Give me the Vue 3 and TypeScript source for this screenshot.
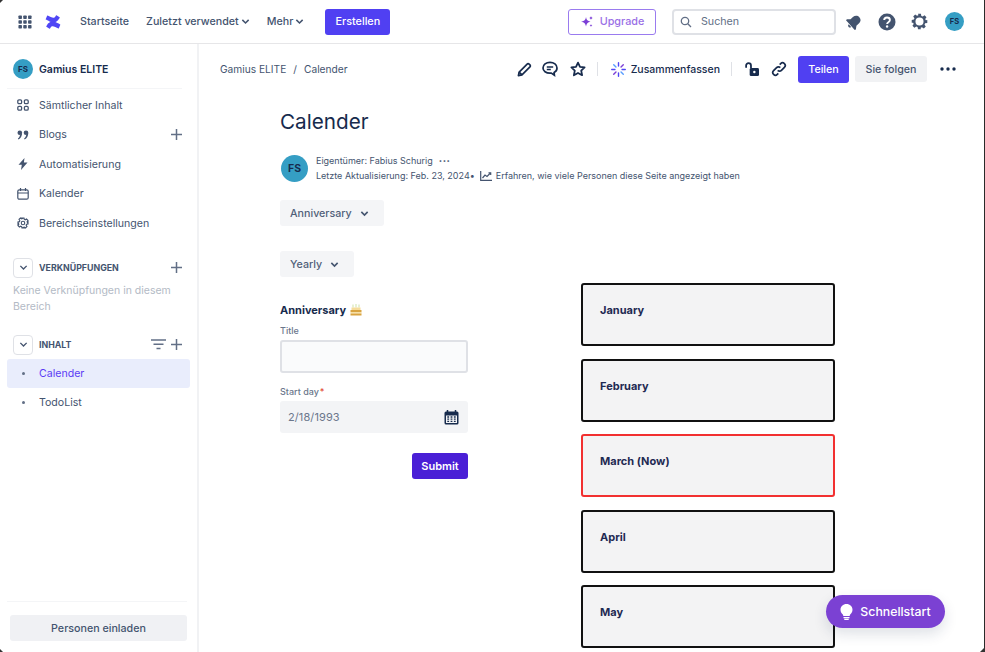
<script setup lang="ts">
const months = [
  { name: 'January', now: false },
  { name: 'February', now: false },
  { name: 'March (Now)', now: true },
  { name: 'April', now: false },
  { name: 'May', now: false },
]
</script>

<template>
  <div class="app">
    <header class="topbar">
      <svg class="grid-ic" width="14" height="14" viewBox="0 0 16 16" fill="#44546f">
        <rect v-for="p in [[0.5,0.5],[6,0.5],[11.5,0.5],[0.5,6],[6,6],[11.5,6],[0.5,11.5],[6,11.5],[11.5,11.5]]" :key="p.join()" :x="p[0]" :y="p[1]" width="4" height="4" rx=".8" />
      </svg>
      <svg class="logo" width="16" height="16" viewBox="0 0 24 24" fill="#4f46f5">
        <path d="M2.6 17.2c-.2.4-.5.9-.7 1.2a.5.5 0 0 0 .2.7l4.7 2.9a.5.5 0 0 0 .7-.2c.2-.3.4-.7.7-1.2 1.9-3.1 3.8-2.7 7.2-1.1l4.7 2.2a.5.5 0 0 0 .7-.3l2.2-5.1a.5.5 0 0 0-.3-.7c-1-.5-3-1.4-4.7-2.3C12.1 10.2 6.6 10.5 2.6 17.2z" />
        <path d="M21.4 6.8c.2-.4.5-.9.7-1.2a.5.5 0 0 0-.2-.7l-4.7-2.9a.5.5 0 0 0-.7.2c-.2.3-.4.7-.7 1.2-1.9 3.1-3.8 2.7-7.2 1.1L3.9 2.3a.5.5 0 0 0-.7.3L1 7.7a.5.5 0 0 0 .3.7c1 .5 3 1.4 4.7 2.3 5.9 3.1 11.4 2.8 15.4-3.9z" />
      </svg>
      <nav class="topnav">
        <span>Startseite</span>
        <span>Zuletzt verwendet<svg class="chev" width="9" height="9" viewBox="0 0 10 10"><path d="M1.5 3.2 5 6.7l3.5-3.5" fill="none" stroke="#44546f" stroke-width="1.7" /></svg></span>
        <span>Mehr<svg class="chev" width="9" height="9" viewBox="0 0 10 10"><path d="M1.5 3.2 5 6.7l3.5-3.5" fill="none" stroke="#44546f" stroke-width="1.7" /></svg></span>
      </nav>
      <button class="create">Erstellen</button>
      <div class="grow"></div>
      <button class="upgrade">
        <svg width="14" height="14" viewBox="0 0 14 14" fill="#7c3fd6"><path d="M6 2c.5 3 1.500 4 4.500 4.700C7.500 7.400 6.500 8.500 6 11.500 5.500 8.500 4.500 7.400 1 6.700 4.500 6 5.500 5 6 2z" /><path d="M11 1c.2 1.200.7 1.700 1.900 2-1.200.3-1.700.8-1.900 2-.2-1.200-.7-1.700-1.900-2C10.300 2.700 10.800 2.200 11 1zM11 9c.15.9.5 1.300 1.400 1.500-.9.2-1.250.6-1.400 1.500-.15-.9-.5-1.300-1.400-1.500.9-.2 1.250-.6 1.400-1.500z" /></svg>
        Upgrade
      </button>
      <div class="search">
        <svg width="12" height="12" viewBox="0 0 12 12" fill="none" stroke="#626f86" stroke-width="1.300"><circle cx="5" cy="5" r="3.700" /><path d="m7.800 7.800 3.200 3.200" /></svg>
        <span>Suchen</span>
      </div>
      <svg class="bell" width="16" height="16" viewBox="0 0 16 16" fill="#44546f"><g transform="rotate(48 8 8)"><path d="M8 .8C5.200.8 3.600 2.800 3.600 5.500v3.200L1.300 11.500v1.300h13.400v-1.300l-2.300-2.800V5.500C12.400 2.800 10.800.8 8 .8z" /><path d="M6.200 13.500a1.800 1.800 0 0 0 3.600 0z" /></g></svg>
      <svg class="help" width="18" height="18" viewBox="0 0 18 18"><circle cx="9" cy="9" r="8.500" fill="#44546f" /><path d="M6.200 7.100c0-1.600 1.200-2.600 2.800-2.600s2.900 1 2.900 2.500c0 2.300-2.800 2.100-2.800 4" fill="none" stroke="#fff" stroke-width="1.900" /><circle cx="9.100" cy="13.500" r="1.200" fill="#fff" /></svg>
      <svg class="gear" width="17" height="17" viewBox="0 0 24 24"><path fill="#44546f" fill-rule="evenodd" d="M10 1h4l.6 3.100 1.900.8 2.600-1.800 2.800 2.800-1.800 2.600.8 1.900L23 10v4l-3.100.6-.8 1.900 1.800 2.600-2.800 2.800-2.600-1.800-1.900.8L13.900 23h-4l-.6-3.100-1.900-.8-2.600 1.800-2.800-2.800 1.800-2.600-.8-1.900L1 13.900v-4l3.100-.6.8-1.900-1.800-2.600 2.800-2.800 2.600 1.800 1.900-.8zM12 6.300a5.700 5.700 0 1 0 0 11.400 5.700 5.700 0 0 0 0-11.400z" /></svg>
      <div class="avatar top-av">FS</div>
    </header>

    <div class="body">
      <aside class="sidebar">
        <div class="space">
          <div class="avatar space-av">FS</div>
          <b>Gamius ELITE</b>
        </div>
        <div class="rows">
          <div class="row">
            <svg width="12" height="12" viewBox="0 0 12 12" fill="none" stroke="#44546f" stroke-width="1.300"><rect x=".8" y=".8" width="3.800" height="3.800" rx="1.200" /><rect x="7.400" y=".8" width="3.800" height="3.800" rx="1.200" /><rect x=".8" y="7.400" width="3.800" height="3.800" rx="1.200" /><rect x="7.400" y="7.400" width="3.800" height="3.800" rx="1.200" /></svg>
            <span>Sämtlicher Inhalt</span>
          </div>
          <div class="row">
            <svg width="12" height="12" viewBox="0 0 12 12" fill="#44546f"><circle cx="2.800" cy="3.700" r="2.300" /><path d="M5.100 3.700c0 3.300-1.400 5.600-3.700 6.800l-.5-.9C2.300 8.500 2.900 7.200 3 5.700z" /><circle cx="9" cy="3.700" r="2.300" /><path d="M11.300 3.700c0 3.300-1.400 5.600-3.700 6.800l-.5-.9c1.400-1.100 2-2.400 2.100-3.900z" /></svg>
            <span>Blogs</span>
            <svg class="plus" width="11" height="11" viewBox="0 0 11 11"><path d="M5.500 0v11M0 5.500h11" stroke="#626f86" stroke-width="1.500" /></svg>
          </div>
          <div class="row">
            <svg width="12" height="12" viewBox="0 0 12 12" fill="#44546f"><path d="M7.500 0 1.500 6.800h3.300L4 12l6.500-7.500H6.900z" /></svg>
            <span>Automatisierung</span>
          </div>
          <div class="row">
            <svg width="12" height="12" viewBox="0 0 12 12" fill="none" stroke="#44546f" stroke-width="1.200"><rect x=".8" y="1.800" width="10.400" height="9.400" rx="1.500" /><path d="M.8 5h10.400M3.500 0v3M8.500 0v3" /></svg>
            <span>Kalender</span>
          </div>
          <div class="row">
            <svg width="12" height="12" viewBox="0 0 24 24"><path fill="none" stroke="#44546f" stroke-width="2.300" d="M10 2h4l.6 2.900 1.900.8 2.500-1.600 2.800 2.800-1.600 2.500.8 1.900L22 10v4l-2.900.6-.8 1.900 1.600 2.500-2.800 2.800-2.500-1.600-1.900.8L13.900 22h-4l-.6-2.900-1.900-.8-2.500 1.600-2.800-2.800 1.600-2.500-.8-1.900L2 13.900v-4l2.900-.6.8-1.900-1.600-2.500 2.800-2.800 2.500 1.600 1.900-.8z" /><circle cx="12" cy="12" r="3.500" fill="none" stroke="#44546f" stroke-width="2.300" /></svg>
            <span>Bereichseinstellungen</span>
          </div>
        </div>

        <div class="sec sec-first">
          <div class="box"><svg width="9" height="9" viewBox="0 0 10 10"><path d="M1.500 3.200 5 6.700l3.500-3.500" fill="none" stroke="#44546f" stroke-width="1.500" /></svg></div>
          <b>VERKNÜPFUNGEN</b>
          <svg class="plus" width="11" height="11" viewBox="0 0 11 11"><path d="M5.500 0v11M0 5.500h11" stroke="#626f86" stroke-width="1.500" /></svg>
        </div>
        <p class="none">Keine Verknüpfungen in diesem Bereich</p>

        <div class="sec sec-second">
          <div class="box"><svg width="9" height="9" viewBox="0 0 10 10"><path d="M1.500 3.200 5 6.700l3.500-3.500" fill="none" stroke="#44546f" stroke-width="1.500" /></svg></div>
          <b>INHALT</b>
          <svg class="filter" width="15" height="11" viewBox="0 0 15 11"><path d="M0 1h15M2.500 5.200h10M5.500 9.500h4" stroke="#626f86" stroke-width="1.400" /></svg>
          <svg class="plus tight" width="11" height="11" viewBox="0 0 11 11"><path d="M5.500 0v11M0 5.500h11" stroke="#626f86" stroke-width="1.500" /></svg>
        </div>
        <div class="tree active"><i></i><span>Calender</span></div>
        <div class="tree"><i></i><span>TodoList</span></div>

        <div class="grow"></div>
        <div class="invite-wrap"><button class="invite">Personen einladen</button></div>
      </aside>

      <main class="main">
        <div class="pagebar">
          <div class="crumbs">Gamius ELITE<em>/</em>Calender</div>
          <div class="grow"></div>
          <svg class="act" width="15" height="15" viewBox="0 0 16 16" fill="none" stroke="#172b4d" stroke-width="1.800"><path d="M1.500 14.500 2.300 10.700 10.800 2.200c.6-.6 1.500-.6 2.100 0l.9.9c.6.6.6 1.500 0 2.100L5.300 13.700z" stroke-linejoin="round" /><path d="m2.300 10.700 3 3" /></svg>
          <svg class="act a2" width="16" height="16" viewBox="0 0 16 16" fill="none" stroke="#172b4d" stroke-width="1.700"><path d="M8 1.300c3.900 0 7 2.400 7 5.600 0 2.100-1.200 3.700-2.900 4.600l.3 2.700-3.100-2.100c-.4.100-.8.100-1.300.1-3.900 0-7-2.200-7-5.300S4.100 1.300 8 1.300z" /><path d="M4.800 6h6.400M4.800 8.500h4" /></svg>
          <svg class="act a3" width="16" height="16" viewBox="0 0 16 16" fill="none" stroke="#172b4d" stroke-width="1.800"><path d="m8 1.600 2 4.200 4.600.6-3.400 3.200.9 4.600L8 12.000l-4.100 2.200.9-4.600L1.400 6.400 6 5.800z" stroke-linejoin="round" /></svg>
          <span class="sep s1"></span>
          <svg class="spark" width="15" height="15" viewBox="0 0 16 16" stroke-width="1.500" stroke-linecap="round"><path d="M8 .8v3.400M8 11.800v3.400M.8 8h3.400M11.800 8h3.400" stroke="#4f46f5" /><path d="m2.900 2.900 2.400 2.400M10.700 10.700l2.400 2.400" stroke="#579dff" /><path d="m13.100 2.900-2.400 2.400M5.300 10.700l-2.400 2.400" stroke="#7c3fd6" /></svg>
          <span class="summ">Zusammenfassen</span>
          <span class="sep s2"></span>
          <svg class="act lock" width="14" height="15" viewBox="0 0 15 16"><path d="M1.200 6V3.800C1.200 2.300 2.300 1.200 3.800 1.200s2.600 1.100 2.600 2.600V6.500" fill="none" stroke="#172b4d" stroke-width="1.900" /><rect x="5" y="6.500" width="10" height="8.500" rx="1.500" fill="#172b4d" /><circle cx="10" cy="10.700" r="1.300" fill="#fff" /></svg>
          <svg class="act link" width="16" height="16" viewBox="0 0 16 16" fill="none" stroke="#172b4d" stroke-width="1.700"><path d="M6.700 9.300a2.600 2.600 0 0 0 3.700 0l3-3a2.600 2.600 0 0 0-3.700-3.700l-1 1" /><path d="M9.300 6.700a2.600 2.600 0 0 0-3.700 0l-3 3a2.600 2.600 0 0 0 3.700 3.700l1-1" /></svg>
          <button class="share">Teilen</button>
          <button class="follow">Sie folgen</button>
          <svg class="more" width="16" height="4" viewBox="0 0 16 4" fill="#172b4d"><circle cx="2" cy="2" r="1.700" /><circle cx="8" cy="2" r="1.700" /><circle cx="14" cy="2" r="1.700" /></svg>
        </div>

        <div class="page">
          <h1>Calender</h1>
          <div class="byline">
            <div class="avatar by-av">FS</div>
            <div class="by-text">
              <div>Eigentümer: Fabius Schurig<span class="dots">•••</span></div>
              <div class="by2">Letzte Aktualisierung: Feb. 23, 2024<span class="bul">•</span>
                <svg width="12" height="10" viewBox="0 0 12 10" fill="none" stroke="#44546f" stroke-width="1.200"><path d="M.7 0v9.300H12M2.500 7l2.500-3 2 1.500L10.500 2" /><path d="M8.500 1.800h2.200V4" /></svg>
                <span>Erfahren, wie viele Personen diese Seite angezeigt haben</span>
              </div>
            </div>
          </div>

          <button class="select sel-a">Anniversary<svg width="9" height="9" viewBox="0 0 10 10"><path d="M1.500 3.200 5 6.700l3.500-3.500" fill="none" stroke="#44546f" stroke-width="1.800" /></svg></button>
          <button class="select sel-y">Yearly<svg width="9" height="9" viewBox="0 0 10 10"><path d="M1.500 3.200 5 6.700l3.500-3.500" fill="none" stroke="#44546f" stroke-width="1.800" /></svg></button>

          <div class="columns">
            <form class="form" @submit.prevent>
              <div class="form-title">Anniversary
                <svg width="12" height="12" viewBox="0 0 12 12"><path d="M3 .5v3M6 0v3.500M9 .5v3" stroke="#cfe3a8" stroke-width="1" /><rect x="1.500" y="3.500" width="9" height="2.500" fill="#f6dc9a" /><rect x=".5" y="6" width="11" height="2.200" fill="#d9a441" /><rect x=".5" y="8.200" width="11" height="1.300" fill="#f6dc9a" /><rect x=".5" y="9.500" width="11" height="2" fill="#d9a441" /></svg>
              </div>
              <label class="lbl">Title</label>
              <div class="input"></div>
              <label class="lbl lbl2">Start day<span class="req">*</span></label>
              <div class="date">
                <span>2/18/1993</span>
                <svg width="15" height="15" viewBox="0 0 15 15"><path d="M3.500 0v3M11.500 0v3" stroke="#172b4d" stroke-width="1.500" /><rect x=".5" y="1.500" width="14" height="13" rx="1.500" fill="#172b4d" /><rect x="2" y="5.500" width="11" height="7.500" fill="#f3f4f6" /><path d="M3.300 7h1.800M6.600 7h1.800M9.900 7h1.800M3.300 9.200h1.800M6.600 9.200h1.800M9.900 9.200h1.800M3.300 11.400h1.800M6.600 11.400h1.800M9.900 11.400h1.800" stroke="#172b4d" stroke-width="1.300" /></svg>
              </div>
              <div class="submit-row"><button class="submit" type="submit">Submit</button></div>
            </form>
            <div class="months">
              <div v-for="m in months" :key="m.name" class="month" :class="{ now: m.now }">{{ m.name }}</div>
            </div>
          </div>
        </div>
      </main>
    </div>

    <button class="quick">
      <svg width="13" height="16" viewBox="0 0 13 16" fill="#fff"><path d="M6.500 0C3 0 .5 2.500.5 5.700c0 2.200 1.200 3.400 2.100 4.600.5.600.6 1.100.7 1.700h6.400c.1-.6.200-1.100.7-1.700.9-1.200 2.100-2.400 2.100-4.600C12.500 2.500 10 0 6.500 0zM3.500 13h6v1.300h-6zM4.300 14.800h4.400V16H4.300z" /></svg>
      Schnellstart
    </button>

    <span class="edge"></span>
    <span class="corner tl"></span>
    <span class="corner bl"></span>
    <span class="corner br"></span>
  </div>
</template>

<style scoped>
.app {
  position: relative;
  width: 985px;
  height: 652px;
  overflow: hidden;
  display: flex;
  flex-direction: column;
  background: #fff;
  font-family: Inter, "Noto Sans", sans-serif;
  font-size: 11px;
  color: #44546f;
}
.grow { flex: 1; }
button { font-family: inherit; border: 0; padding: 0; cursor: pointer; }
svg { display: block; flex: none; }

.topbar {
  height: 43px;
  flex: none;
  display: flex;
  align-items: center;
  padding-left: 18px;
  padding-right: 21px;
  border-bottom: 1px solid #e6e6e8;
}
.logo { margin-left: 13px; }
.topnav { display: flex; margin-left: 19px; gap: 17px; font-size: 10.700px; font-weight: 500; color: #44546f; }
.topnav span { display: flex; align-items: center; gap: 2px; }
.create {
  margin-left: 21px;
  width: 65px;
  height: 26px;
  border-radius: 3px;
  background: #5040f2;
  color: #fff;
  font-size: 10.800px;
  font-weight: 500;
}
.upgrade {
  width: 88px;
  height: 26px;
  border: 1px solid #9a7bef;
  border-radius: 3px;
  background: #fff;
  color: #9a6fe6;
  font-size: 10.800px;
  font-weight: 500;
  display: flex;
  align-items: center;
  justify-content: center;
  gap: 6px;
}
.search {
  margin-left: 16px;
  width: 164px;
  height: 26px;
  box-sizing: border-box;
  border: 2px solid #dfe1e6;
  border-radius: 4px;
  display: flex;
  align-items: center;
  padding-left: 6px;
  gap: 9px;
  font-size: 10.700px;
  font-weight: 400;
  color: #626f86;
}
.bell { margin-left: 10px; }
.help { margin-left: 16px; }
.gear { margin-left: 15px; }
.avatar {
  border-radius: 50%;
  background: #359ec4;
  color: #172b4d;
  font-weight: 700;
  display: flex;
  align-items: center;
  justify-content: center;
  flex: none;
}
.top-av { width: 19px; height: 19px; font-size: 7.500px; margin-left: 17px; }

.body { flex: 1; display: flex; min-height: 0; }
.sidebar {
  width: 197px;
  flex: none;
  border-right: 2px solid #f1f2f4;
  display: flex;
  flex-direction: column;
}
.space {
  height: 45px;
  flex: none;
  box-sizing: border-box;
  margin: 0 15px 0 7px;
  padding: 6px 0 0 6px;
  display: flex;
  align-items: center;
  gap: 6px;
  border-bottom: 1px solid #f4f5f7;
  font-size: 10.500px;
  color: #172b4d;
}
.space-av { width: 20px; height: 20px; font-size: 8px; }
.space b { font-weight: 600; }
.rows { margin-top: 1.500px; }
.row {
  height: 29.500px;
  display: flex;
  align-items: center;
  padding-left: 17px;
  gap: 10px;
  font-size: 10.600px;
}
.row .plus { margin-left: auto; margin-right: 15px; }
.sec { display: flex; align-items: center; padding-left: 13px; height: 20px; }
.sec b { margin-left: 6px; font-size: 8.800px; font-weight: 700; color: #44546f; }
.sec .plus { margin-left: auto; margin-right: 15px; }
.sec .filter { margin-left: auto; margin-right: 5px; }
.sec .plus.tight { margin-left: 0; }
.sec-first { margin-top: 19.500px; }
.sec-second { margin-top: 20px; }
.box {
  width: 20px;
  height: 20px;
  box-sizing: border-box;
  border: 1px solid #dfe1e6;
  border-radius: 4px;
  display: flex;
  align-items: center;
  justify-content: center;
}
.none {
  margin: 5px 10px 0 13px;
  font-size: 10.500px;
  line-height: 16px;
  color: #b3bac5;
}
.tree {
  height: 29px;
  box-sizing: border-box;
  margin: 0 7px;
  padding: 1px 0 0 32px;
  display: flex;
  align-items: center;
  position: relative;
  border-radius: 3px;
  font-size: 10.600px;
}
.sec-second + .tree { margin-top: 4px; }
.tree i {
  position: absolute;
  left: 14.500px;
  top: 13px;
  width: 3px;
  height: 3px;
  border-radius: 50%;
  background: #626f86;
}
.tree.active { background: #e9edfc; color: #5b3cf5; }
.invite-wrap {
  height: 51px;
  box-sizing: border-box;
  margin: 0 10px 0 7px;
  padding: 13px 0 0 3px;
  border-top: 1px solid #f4f5f7;
}
.invite {
  display: block;
  width: 177px;
  height: 26px;
  border-radius: 3px;
  background: #f0f1f4;
  color: #44546f;
  font-size: 10.700px;
  font-weight: 500;
}

.main { flex: 1; min-width: 0; }
.pagebar {
  height: 50px;
  display: flex;
  align-items: center;
  padding: 0 29px 0 21px;
}
.crumbs { font-size: 10.200px; color: #44546f; }
.crumbs em { font-style: normal; margin: 0 7px; }
.a2 { margin-left: 10px; }
.a3 { margin-left: 12px; }
.sep { width: 1px; height: 14px; background: #dfe1e6; }
.s1 { margin-left: 11px; margin-right: 13px; }
.spark { margin-right: 5px; }
.summ { font-size: 10.500px; font-weight: 500; color: #172b4d; }
.s2 { margin: 0 13px 0 11px; }
.link { margin-left: 12px; }
.share {
  margin-left: 11px;
  width: 51px;
  height: 27px;
  border-radius: 3px;
  background: #5040f2;
  color: #fff;
  font-size: 10.700px;
  font-weight: 500;
}
.follow {
  margin-left: 6px;
  width: 72px;
  height: 26px;
  border-radius: 3px;
  background: #f1f2f4;
  color: #44546f;
  font-size: 10.700px;
  font-weight: 500;
}
.more { margin-left: 13px; }

.page { padding-left: 81px; }
h1 {
  margin: 13px 0 0;
  font-size: 20.700px;
  line-height: 30px;
  font-weight: 400;
  color: #172b4d;
}
.byline { display: flex; margin-top: 18px; margin-left: 1px; }
.by-av { width: 27px; height: 27px; font-size: 10.500px; margin-top: 0; }
.by-text { margin-left: 8px; font-size: 9px; line-height: 15px; color: #44546f; margin-top: -2px; }
.dots { margin-left: 6px; font-size: 6px; letter-spacing: .5px; vertical-align: 1px; }
.by2 { display: flex; align-items: center; }
.by2 svg { margin-left: 5px; margin-right: 4px; }
.select {
  display: flex;
  align-items: center;
  height: 26px;
  box-sizing: border-box;
  padding-left: 10px;
  border-radius: 3px;
  background: #f4f5f7;
  color: #505f79;
  font-size: 10.700px;
  font-weight: 500;
}
.select svg { margin-left: 8px; }
.sel-a { width: 104px; margin-top: 17px; }
.sel-y { width: 74px; margin-top: 25px; }
.columns { display: flex; margin-top: 6px; }
.form { width: 188px; padding-top: 20px; }
.form-title {
  display: flex;
  align-items: center;
  gap: 4px;
  height: 14px;
  font-size: 11px;
  font-weight: 700;
  color: #172b4d;
}
.lbl { display: block; margin-top: 7px; height: 13px; line-height: 13px; font-size: 9px; font-weight: 500; color: #6b778c; }
.lbl2 { margin-top: 12px; }
.req { color: #e34935; margin-left: 1px; }
.input {
  margin-top: 3px;
  height: 33px;
  box-sizing: border-box;
  border: 2px solid #dfe1e6;
  border-radius: 3px;
  background: #fafbfc;
}
.date {
  margin-top: 3px;
  height: 32px;
  box-sizing: border-box;
  border-radius: 3px;
  background: #f3f4f6;
  display: flex;
  align-items: center;
  justify-content: space-between;
  padding: 0 9px 0 8px;
  font-size: 11px;
  color: #6b778c;
  letter-spacing: .1px;
}
.submit-row { display: flex; justify-content: flex-end; margin-top: 20px; }
.submit {
  width: 56px;
  height: 26px;
  border-radius: 3px;
  background: #4a1fd6;
  color: #fff;
  font-size: 11px;
  font-weight: 600;
}
.months { margin-left: 113px; display: flex; flex-direction: column; gap: 12.500px; }
.month {
  width: 254px;
  height: 63px;
  box-sizing: border-box;
  border: 2px solid #111;
  border-radius: 3px;
  background: #f3f3f4;
  padding: 17px 0 0 17px;
  font-size: 11px;
  line-height: 16px;
  font-weight: 700;
  color: #1f2a52;
}
.month.now { border-color: #f23030; }

.quick {
  position: absolute;
  left: 826px;
  top: 595px;
  width: 119px;
  height: 33px;
  border-radius: 17px;
  background: #7b41d3;
  color: #fff;
  font-size: 12.300px;
  font-weight: 500;
  display: flex;
  align-items: center;
  justify-content: center;
  gap: 7px;
  box-shadow: 0 6px 14px rgba(23, 43, 77, .14);
}
.edge { position: absolute; top: 0; right: 0; bottom: 0; width: 1px; background: #2a2a2a; }
.corner { position: absolute; width: 3px; height: 3px; background: #333; }
.tl { left: 0; top: 0; clip-path: polygon(0 0, 100% 0, 0 100%); }
.bl { left: 0; bottom: 0; clip-path: polygon(0 0, 100% 100%, 0 100%); }
.br { right: 0; bottom: 0; width: 5px; height: 5px; clip-path: polygon(100% 0, 100% 100%, 0 100%); }
</style>
